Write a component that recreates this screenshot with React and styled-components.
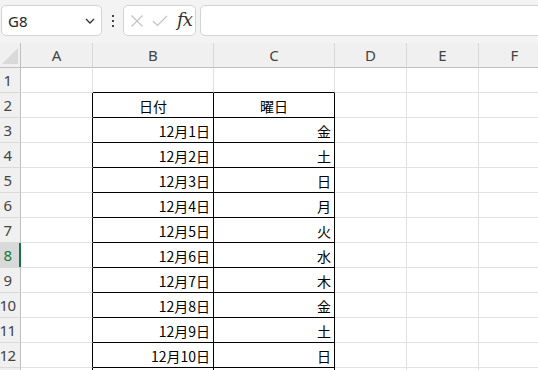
import React from 'react';
import styled, { createGlobalStyle } from 'styled-components';

const GlobalStyle = createGlobalStyle`
  html, body {
    margin: 0;
    padding: 0;
    background: #ffffff;
    overflow: hidden;
  }
  body {
    width: 538px;
    height: 370px;
    font-family: "Noto Sans", "Noto Sans CJK JP", sans-serif;
  }
`;

const COLS = [
  { key: 'A', width: 72 },
  { key: 'B', width: 121 },
  { key: 'C', width: 121 },
  { key: 'D', width: 72 },
  { key: 'E', width: 72 },
  { key: 'F', width: 72 }
];

const DAYS = ['金', '土', '日', '月', '火', '水', '木', '金', '土', '日'];

const Page = styled.div`
  width: 538px;
  height: 370px;
  overflow: hidden;
  background: #fff;
`;

const Toolbar = styled.div`
  display: flex;
  align-items: center;
  height: 43px;
  padding: 5px 0 7px 1px;
  box-sizing: border-box;
  background: #f3f3f3;
`;

const Box = styled.div`
  display: flex;
  align-items: center;
  height: 31px;
  box-sizing: border-box;
  background: #fff;
  border: 1px solid #d4d4d4;
  border-radius: 5px;
  width: ${(p) => p.$width || 'auto'};
  flex: ${(p) => (p.$grow ? '1' : 'none')};
  margin-right: ${(p) => (p.$grow ? '-10px' : `${p.$right || 0}px`)};
`;

const NameText = styled.span`
  flex: 1;
  padding-left: 6px;
  font-size: 15px;
  color: #262626;
`;

const Dots = styled.div`
  display: flex;
  flex-direction: column;
  align-items: center;
  gap: 3px;
  width: 21px;
`;

const Dot = styled.span`
  width: 2px;
  height: 2px;
  background: #444;
`;

const Fx = styled.span`
  font-family: "DejaVu Serif", "Liberation Serif", serif;
  font-style: italic;
  font-size: 18px;
  line-height: 1;
  color: #333;
  margin-left: 9px;
  letter-spacing: -1px;
  padding-bottom: 2px;
`;

const Grid = styled.div`
  display: flex;
  flex-direction: column;
`;

const Row = styled.div`
  display: flex;
  height: 25px;
`;

const Corner = styled.div`
  position: relative;
  width: 21px;
  flex: none;
  box-sizing: border-box;
  background: #f0f0f0;
  border-right: 1px solid #bfbfbf;
  border-bottom: 1px solid #bfbfbf;
`;

const Triangle = styled.span`
  position: absolute;
  right: 2px;
  bottom: 3px;
  width: 0;
  height: 0;
  border-left: 16px solid transparent;
  border-bottom: 16px solid #d9d9d9;
`;

const ColHead = styled.div`
  width: ${(p) => p.$width}px;
  flex: none;
  box-sizing: border-box;
  display: flex;
  align-items: center;
  justify-content: center;
  background: #f0f0f0;
  border-right: 1px solid #d8d8d8;
  border-bottom: 1px solid #bfbfbf;
  font-size: 15px;
  color: #444;
`;

const RowHead = styled.div`
  position: relative;
  width: 21px;
  flex: none;
  box-sizing: border-box;
  display: flex;
  align-items: center;
  justify-content: center;
  padding-right: 5px;
  white-space: nowrap;
  letter-spacing: -0.5px;
  background: ${(p) => (p.$active ? '#d9d9d9' : '#f0f0f0')};
  border-right: 1px solid #bfbfbf;
  border-bottom: 1px solid #dadada;
  font-size: 15px;
  color: ${(p) => (p.$active ? '#107c41' : '#444')};

  &::after {
    content: '';
    display: ${(p) => (p.$active ? 'block' : 'none')};
    position: absolute;
    top: 0;
    right: -1px;
    width: 2px;
    height: 100%;
    background: #1e7145;
  }
`;

const Cell = styled.div`
  width: ${(p) => p.$width}px;
  flex: none;
  box-sizing: border-box;
  display: flex;
  align-items: center;
  justify-content: ${(p) => p.$align || 'flex-start'};
  padding: 1px 3px 0 3px;
  border-right: 1px solid ${(p) => (p.$blackRight ? '#000' : '#e1e1e1')};
  border-bottom: 1px solid ${(p) => (p.$blackBottom ? '#000' : '#e1e1e1')};
  font-family: "Noto Sans CJK JP", "Noto Sans", sans-serif;
  font-size: 14px;
  color: #000;
`;

const XIcon = () => (
  <svg width="14" height="14" viewBox="0 0 14 14" style={{ marginLeft: 6 }}>
    <path d="M1.5 1.5 L12.5 12.5 M12.5 1.5 L1.5 12.5" stroke="#c2c2c2" strokeWidth="1.1" fill="none" />
  </svg>
);

const CheckIcon = () => (
  <svg width="16" height="12" viewBox="0 0 16 12" style={{ marginLeft: 8 }}>
    <path d="M1 6 L5.5 10.5 L15 1" stroke="#c2c2c2" strokeWidth="1.1" fill="none" />
  </svg>
);

const Chevron = () => (
  <svg width="10" height="6" viewBox="0 0 10 6" style={{ marginRight: 6 }}>
    <path d="M1 1 L5 5 L9 1" stroke="#333" strokeWidth="1.3" fill="none" />
  </svg>
);

// row 13 is only a sliver at the bottom edge, so it stays empty
function cellContent(row, col) {
  if (row === 2 && col === 'B') return '日付';
  if (row === 2 && col === 'C') return '曜日';
  if (row >= 3 && row <= 12) {
    if (col === 'B') return `12月${row - 2}日`;
    if (col === 'C') return DAYS[row - 3];
  }
  return '';
}

function App() {
  const rows = Array.from({ length: 13 }, (_, i) => i + 1);

  return (
    <Page>
      <GlobalStyle />
      <Toolbar>
        <Box $width="101px">
          <NameText>G8</NameText>
          <Chevron />
        </Box>
        <Dots>
          <Dot />
          <Dot />
          <Dot />
        </Dots>
        <Box $width="73px" $right={4}>
          <XIcon />
          <CheckIcon />
          <Fx>fx</Fx>
        </Box>
        <Box $grow />
      </Toolbar>

      <Grid>
        <Row>
          <Corner>
            <Triangle />
          </Corner>
          {COLS.map((c) => (
            <ColHead key={c.key} $width={c.width}>
              {c.key}
            </ColHead>
          ))}
        </Row>
        {rows.map((r) => (
          <Row key={r}>
            <RowHead $active={r === 8}>{r <= 12 ? r : ''}</RowHead>
            {COLS.map((c) => {
              const inTable = r >= 2 && (c.key === 'B' || c.key === 'C');
              return (
                <Cell
                  key={c.key}
                  $width={c.width}
                  $align={r === 2 ? 'center' : 'flex-end'}
                  $blackRight={inTable || (c.key === 'A' && r >= 2)}
                  $blackBottom={inTable || (r === 1 && (c.key === 'B' || c.key === 'C'))}
                >
                  {cellContent(r, c.key)}
                </Cell>
              );
            })}
          </Row>
        ))}
      </Grid>
    </Page>
  );
}

export default App;
